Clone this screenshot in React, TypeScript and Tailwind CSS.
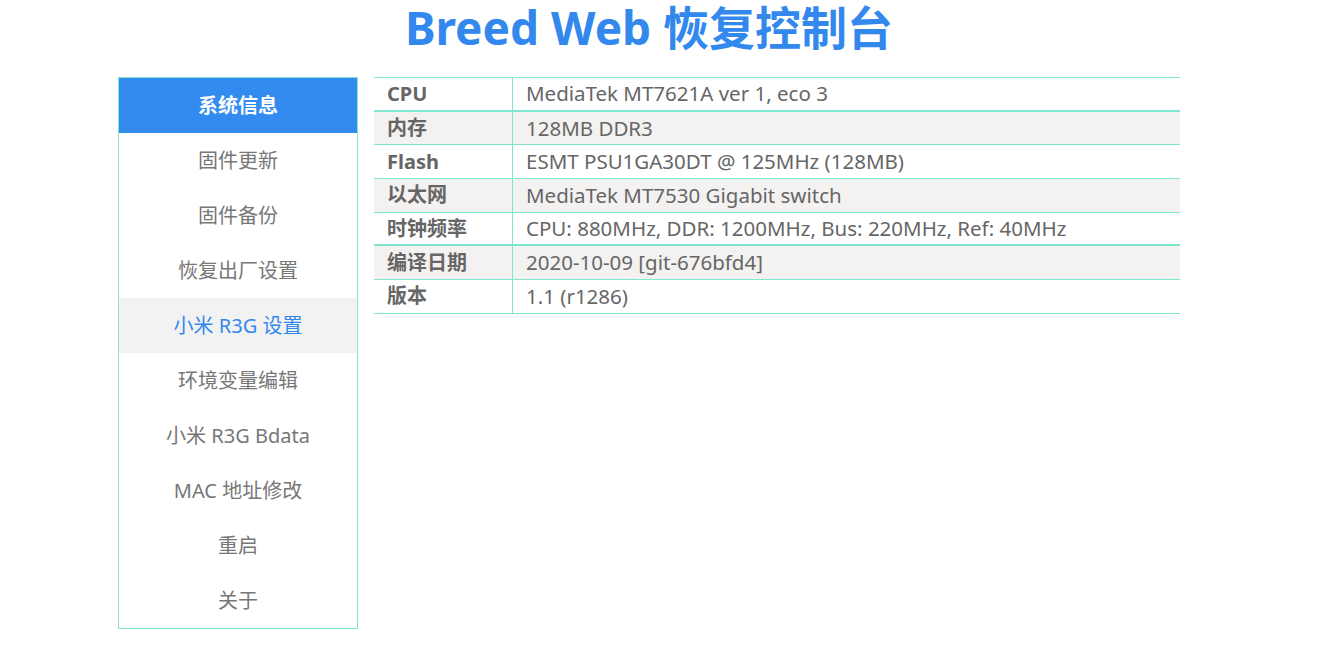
import React from "react";

const menu = [
  "系统信息",
  "固件更新",
  "固件备份",
  "恢复出厂设置",
  "小米 R3G 设置",
  "环境变量编辑",
  "小米 R3G Bdata",
  "MAC 地址修改",
  "重启",
  "关于",
];

const rows: { label: string; value: string; thick?: boolean }[] = [
  { label: "CPU", value: "MediaTek MT7621A ver 1, eco 3", thick: true },
  { label: "内存", value: "128MB DDR3" },
  { label: "Flash", value: "ESMT PSU1GA30DT @ 125MHz (128MB)" },
  { label: "以太网", value: "MediaTek MT7530 Gigabit switch" },
  { label: "时钟频率", value: "CPU: 880MHz, DDR: 1200MHz, Bus: 220MHz, Ref: 40MHz", thick: true },
  { label: "编译日期", value: "2020-10-09 [git-676bfd4]" },
  { label: "版本", value: "1.1 (r1286)" },
];

export default function App() {
  return (
    <div
      className="min-h-screen w-full bg-white text-[#666]"
      style={{ fontFamily: '"Noto Sans", "Noto Sans CJK SC", sans-serif' }}
    >
      {/* Title */}
      <div className="ml-[118px] w-[1062px] h-[77px] text-center">
        <h1 className="text-[46px] leading-[54px] font-bold text-[#3388ee]">
          Breed Web 恢复控制台
        </h1>
      </div>

      <div className="ml-[118px] flex items-start gap-[16px]">
        {/* Sidebar */}
        <div className="w-[240px] border border-[#7fe7d0] flex flex-col">
          {menu.map((m, i) => (
            <div
              key={m}
              className={`h-[55px] flex items-center justify-center text-[20px] ${
                i === 0
                  ? "bg-[#338bef] text-white font-bold"
                  : i === 4
                    ? "bg-[#f2f2f2] text-[#3388ee]"
                    : "text-[#777]"
              }`}
            >
              {m}
            </div>
          ))}
        </div>

        {/* Info table */}
        <div className="w-[806px] border-t border-[#7fe7d0]">
          {rows.map((r, i) => (
            <div
              key={r.label}
              className={`flex h-[33.7px] ${
                r.thick ? "border-b-2" : "border-b"
              } border-[#7fe7d0] ${i % 2 === 1 ? "bg-[#f3f2f1]" : ""}`}
            >
              <div className="w-[139px] shrink-0 pl-[13px] flex items-center text-[20px] font-bold text-[#666] border-r border-[#7fe7d0]">
                {r.label}
              </div>
              <div className="pl-[13px] flex items-center text-[20.5px] text-[#666]">
                {r.value}
              </div>
            </div>
          ))}
        </div>
      </div>
    </div>
  );
}
